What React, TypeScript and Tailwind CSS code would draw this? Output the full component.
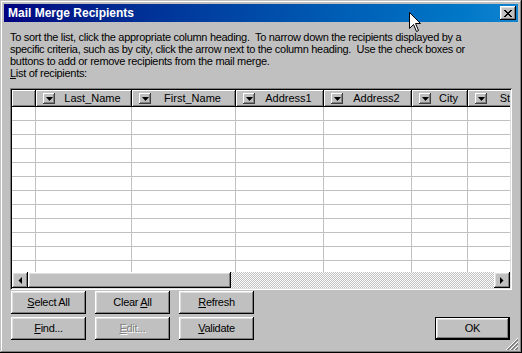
import React from "react";

const raised =
  "shadow-[inset_-1px_-1px_#000,inset_1px_1px_#fff,inset_-2px_-2px_#808080,inset_2px_2px_#dfdfdf]";

const cols = [
  { w: 24, label: "" },
  { w: 96, label: "Last_Name" },
  { w: 104, label: "First_Name" },
  { w: 88, label: "Address1" },
  { w: 88, label: "Address2" },
  { w: 56, label: "City" },
  { w: 72, label: "State" },
];

function DownArrowBtn() {
  return (
    <div className="w-[12px] h-[11px] shrink-0 bg-[#c0c0c0] shadow-[inset_-1px_-1px_#404040,inset_1px_1px_#fff,inset_-2px_-2px_#808080] flex items-center justify-center">
      <svg width="7" height="4" viewBox="0 0 7 4" className="block">
        <polygon points="0,0 7,0 3.5,4" fill="#000" />
      </svg>
    </div>
  );
}

function Btn({
  children,
  disabled,
}: {
  children: React.ReactNode;
  disabled?: boolean;
}) {
  return (
    <div
      className={`w-[75px] h-[23px] bg-[#c0c0c0] ${raised} flex items-center justify-center text-[11px] tracking-[-0.3px] ${
        disabled ? "text-[#808080] [text-shadow:1px_1px_0_#fff]" : "text-black"
      }`}
    >
      <span className="whitespace-pre">{children}</span>
    </div>
  );
}

export default function App() {
  const rows = Array.from({ length: 12 });
  return (
    <div className="relative w-[522px] h-[353px] bg-[#c0c0c0] p-[4px] flex flex-col font-['Liberation_Sans',Arial,sans-serif] text-black shadow-[inset_-1px_-1px_#000,inset_1px_1px_#c0c0c0,inset_-2px_-2px_#808080,inset_2px_2px_#fff] overflow-hidden select-none">
      {/* Title bar */}
      <div className="h-[18px] flex items-center bg-gradient-to-r from-[#000080] to-[#1084d0] pl-[4px] pr-[2px]">
        <div className="flex-1 text-white font-bold text-[12px] leading-[18px]">
          Mail Merge Recipients
        </div>
        <div className={`w-[16px] h-[14px] bg-[#c0c0c0] ${raised} flex items-center justify-center`}>
          <svg width="8" height="7" viewBox="0 0 8 7" className="block" shapeRendering="crispEdges">
            <path
              d="M0 0h2v1h-2zM6 0h2v1h-2zM1 1h2v1h-2zM5 1h2v1h-2zM2 2h4v1h-4zM3 3h2v1h-2zM2 4h4v1h-4zM1 5h2v1h-2zM5 5h2v1h-2zM0 6h2v1h-2zM6 6h2v1h-2z"
              fill="#000"
            />
          </svg>
        </div>
      </div>

      {/* Body */}
      <div className="flex-1 flex flex-col px-[6px]">
        <div className="mt-[9px] text-[11px] leading-[12px] tracking-[-0.3px] whitespace-pre">
          {"To sort the list, click the appropriate column heading.  To narrow down the recipients displayed by a\nspecific criteria, such as by city, click the arrow next to the column heading.  Use the check boxes or\nbuttons to add or remove recipients from the mail merge."}
        </div>
        <div className="text-[11px] leading-[12px] tracking-[-0.3px]">
          <span className="underline">L</span>ist of recipients:
        </div>

        {/* List box */}
        <div className="mt-[9px] w-[502px] h-[202px] p-[2px] bg-white shadow-[inset_1px_1px_#808080,inset_-1px_-1px_#fff,inset_2px_2px_#000,inset_-2px_-2px_#dfdfdf] flex flex-col">
          <div className="w-[498px] h-[182px] overflow-hidden flex flex-col">
            {/* Header */}
            <div className="flex h-[17px] shrink-0">
              {cols.map((c, i) => (
                <div
                  key={i}
                  style={{ width: c.w }}
                  className="shrink-0 h-[17px] bg-[#c0c0c0] shadow-[inset_-1px_-1px_#000,inset_1px_1px_#fff,inset_-2px_-2px_#808080] flex items-center pl-[7px] pr-[2px]"
                >
                  {c.label && (
                    <>
                      <DownArrowBtn />
                      <div className="flex-1 text-center text-[11px] leading-[13px] whitespace-nowrap">
                        {c.label}
                      </div>
                    </>
                  )}
                </div>
              ))}
            </div>
            {/* Rows */}
            {rows.map((_, r) => (
              <div key={r} className="flex h-[14px] shrink-0">
                {cols.map((c, i) => (
                  <div
                    key={i}
                    style={{ width: c.w }}
                    className="shrink-0 h-[14px] border-r border-b border-[#c0c0c0] bg-white"
                  />
                ))}
              </div>
            ))}
          </div>
          {/* Horizontal scrollbar */}
          <div className="flex h-[16px] shrink-0">
            <div className={`w-[16px] h-[16px] bg-[#c0c0c0] ${raised} flex items-center justify-center`}>
              <svg width="4" height="7" viewBox="0 0 4 7" className="block">
                <polygon points="4,0 4,7 0.5,3.5" fill="#000" />
              </svg>
            </div>
            <div className={`w-[203px] h-[16px] bg-[#c0c0c0] ${raised}`} />
            <div className="flex-1 h-[16px] bg-[repeating-conic-gradient(#fff_0%_25%,#c0c0c0_0%_50%)] [background-size:2px_2px]" />
            <div className={`w-[16px] h-[16px] bg-[#c0c0c0] ${raised} flex items-center justify-center`}>
              <svg width="4" height="7" viewBox="0 0 4 7" className="block">
                <polygon points="0,0 0,7 3.5,3.5" fill="#000" />
              </svg>
            </div>
          </div>
        </div>

        {/* Buttons */}
        <div className="mt-[1px] flex items-end justify-between pl-[1px] pr-[2px]">
          <div className="grid grid-cols-3 gap-x-[9px] gap-y-[3px]">
            <Btn>
              <span className="underline">S</span>elect All
            </Btn>
            <Btn>
              {"Clear "}
              <span className="underline">A</span>ll
            </Btn>
            <Btn>
              <span className="underline">R</span>efresh
            </Btn>
            <Btn>
              <span className="underline">F</span>ind...
            </Btn>
            <Btn disabled>
              <span className="underline">E</span>dit...
            </Btn>
            <Btn>
              <span className="underline">V</span>alidate
            </Btn>
          </div>
          <div className="w-[75px] h-[23px] border border-black bg-[#c0c0c0] shadow-[inset_-1px_-1px_#000,inset_1px_1px_#fff,inset_-2px_-2px_#808080,inset_2px_2px_#dfdfdf] flex items-center justify-center text-[11px] tracking-[-0.3px]">
            OK
          </div>
        </div>
      </div>

      {/* Size grip */}
      <svg
        width="12"
        height="12"
        viewBox="0 0 12 12"
        className="absolute right-[4px] bottom-[3px]"
        shapeRendering="crispEdges"
      >
        {[0, 4, 8].map((o) => (
          <g key={o}>
            <line x1={12} y1={o} x2={o} y2={12} stroke="#fff" strokeWidth="1" />
            <line x1={12} y1={o + 1} x2={o + 1} y2={12} stroke="#808080" strokeWidth="1" />
            <line x1={12} y1={o + 2} x2={o + 2} y2={12} stroke="#808080" strokeWidth="1" />
          </g>
        ))}
      </svg>

      {/* Mouse cursor */}
      <svg
        width="13"
        height="21"
        viewBox="0 0 13 21"
        className="absolute left-[409px] top-[12px]"
      >
        <polygon
          points="0.5,0.5 0.5,16.5 4.5,12.5 7.5,19.5 9.5,18.5 6.5,11.5 11.5,11.5"
          fill="#fff"
          stroke="#000"
          strokeWidth="1"
          strokeLinejoin="miter"
        />
      </svg>
    </div>
  );
}
